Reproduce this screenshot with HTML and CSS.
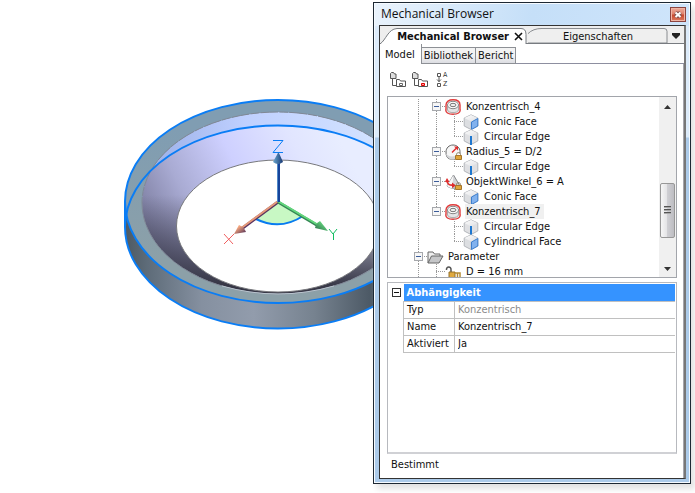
FILE: index.html
```html
<!DOCTYPE html>
<html lang="de">
<head>
<meta charset="utf-8">
<title>Mechanical Browser</title>
<link rel="stylesheet" href="styles.css">
</head>
<body>
<svg class="defs" aria-hidden="true">
  <defs>
    <linearGradient id="cubeTop" x1="0" y1="0" x2="1" y2="1"><stop offset="0" stop-color="#fdfdfd"/><stop offset="1" stop-color="#dfe0e3"/></linearGradient>
    <symbol id="face" viewBox="1 0 18 16">
      <path d="M9 .8 15.800 4v8L9 15.500 2.200 12V4z" fill="#dcdee1" stroke="#b4b7bc"/>
      <path d="M9 1 15.500 4 9 7.500 2.500 4z" fill="url(#cubeTop)"/>
      <path d="M9 7.500v8" stroke="#c4c7cb"/>
      <path d="M9.500 8 15.800 4.500V12l-6.300 3.500z" fill="#82b2ee" stroke="#3d7fce"/>
    </symbol>
    <symbol id="edge" viewBox="1 0 18 16">
      <path d="M9 .8 15.800 4v8L9 15.500 2.200 12V4z" fill="#dfe0e3" stroke="#b4b7bc"/>
      <path d="M9 1 15.500 4 9 7.500 2.500 4z" fill="url(#cubeTop)"/>
      <path d="M9 7v9" stroke="#1f78d0" stroke-width="2"/>
    </symbol>
    <symbol id="concentric" viewBox="1 0 18 16">
      <path d="M2 10V6C2 2.500 5 .8 9 .8S16 2.500 16 6v4c1 3.500-2.500 5.300-7 5.300S1 13.500 2 10z" fill="#ededed" stroke="#e13c3c" stroke-width="1.400"/>
      <path d="M3.500 6v5c1 3.500 10 3.500 11 0V6" fill="#e4e4e6" stroke="#aaa"/>
      <ellipse cx="9" cy="6" rx="5.500" ry="3.700" fill="#fff" stroke="#888"/>
      <ellipse cx="9" cy="6" rx="3" ry="1.700" fill="#eee" stroke="#777"/>
    </symbol>
    <symbol id="lock" viewBox="0 0 7 8">
      <path d="M1.500 4V2.500c0-2.500 4-2.500 4 0V4" fill="none" stroke="#8b8169"/>
      <path d="M.5 3.500h6v4h-6z" fill="#e0a63a" stroke="#a4752a"/>
    </symbol>
    <symbol id="radius" viewBox="1 0 18 16">
      <path d="M10 15H6C3 14.500 2 12 2 8s3-7 7-7 7 3 7 6.500v2" fill="#f6f6f6" stroke="#666"/>
      <path d="M2 9c0 3 1 5 4 6h5V12C7 13 3 12 2 9z" fill="#d4d5d7"/>
      <path d="M8 8.500 12.500 4" stroke="#df2c2c" stroke-width="1.500"/><path d="M10 2.500h4v4z" fill="#df2c2c"/>
      <use href="#lock" x="11" y="8" width="7" height="8"/>
    </symbol>
    <symbol id="angle" viewBox="1 0 18 16">
      <path d="M9.500 1 16 12c-3 3-9 3-13 0z" fill="#d2d3d6" stroke="#85878a"/>
      <path d="M9.500 1 3 12c2 1.500 3 2 5 2z" fill="#f7f7f7"/>
      <path d="M3 7c0 3 3 4.500 6 4" stroke="#df2c2c" stroke-width="1.600" fill="none"/><path d="M.8 8 3 4l2.500 4zM8 8.500l4 3-4 2.500z" fill="#df2c2c"/>
      <use href="#lock" x="11" y="8" width="7" height="8"/>
    </symbol>
    <symbol id="folder" viewBox="1 0 18 16">
      <path d="M2 14V3h5l1.500 2H14v3" fill="#eee" stroke="#666"/>
      <path d="M2 14 5.500 7H17l-4 7z" fill="#c5c6c8" stroke="#666"/>
    </symbol>
    <symbol id="param" viewBox="1 0 18 16">
      <path d="M2.500 6C2 2 7.500 2 7 6v2" fill="none" stroke="#555" stroke-width="1.500"/>
      <path d="M5 8h6v8H5z" fill="#dfa940" stroke="#94702a"/><path d="M11 9h5v7M13.500 9v7" fill="none" stroke="#b58a32" stroke-width="1.500"/>
    </symbol>
  </defs>
</svg>
<div class="workspace">
  <main class="viewport">
    <svg class="model" viewBox="0 0 373 493" preserveAspectRatio="xMinYMin slice" role="img" aria-label="3D-Modell">
      <defs>
        <linearGradient id="wall" gradientUnits="userSpaceOnUse" x1="125" y1="0" x2="431" y2="0">
          <stop offset="0" stop-color="#4d5962"/><stop offset=".07" stop-color="#5d6b78"/><stop offset=".25" stop-color="#8590a0"/><stop offset=".42" stop-color="#929cac"/><stop offset=".62" stop-color="#76828f"/><stop offset=".82" stop-color="#485561"/><stop offset="1" stop-color="#404c57"/>
        </linearGradient>
        <linearGradient id="rim" gradientUnits="userSpaceOnUse" x1="0" y1="130" x2="0" y2="260">
          <stop offset="0" stop-color="#809db2"/><stop offset="1" stop-color="#8ca0a8"/>
        </linearGradient>
        <linearGradient id="cone" gradientUnits="userSpaceOnUse" x1="142" y1="230" x2="335" y2="130">
          <stop offset="0" stop-color="#77789a"/><stop offset=".25" stop-color="#a9abd3"/><stop offset=".52" stop-color="#ced0ff"/><stop offset=".8" stop-color="#e1e5ff"/><stop offset="1" stop-color="#e8edff"/>
        </linearGradient>
        <linearGradient id="coneDark" gradientUnits="userSpaceOnUse" x1="0" y1="195" x2="0" y2="285">
          <stop offset="0" stop-color="#30303e" stop-opacity="0"/><stop offset="1" stop-color="#30303e" stop-opacity=".95"/>
        </linearGradient>
        <linearGradient id="band" gradientUnits="userSpaceOnUse" x1="160" y1="0" x2="373" y2="0">
          <stop offset="0" stop-color="#9fb3ea"/><stop offset=".4" stop-color="#bfd0ff"/><stop offset="1" stop-color="#d2e2ff"/>
        </linearGradient>
        <linearGradient id="zAxis" x1="0" x2="1"><stop offset="0" stop-color="#6aa7ce"/><stop offset="1" stop-color="#173773"/></linearGradient>
        <linearGradient id="xTip" x1="0" y1="0" x2="1" y2="1"><stop offset=".3" stop-color="#f4a57d"/><stop offset="1" stop-color="#412452"/></linearGradient>
        <linearGradient id="yTip" x1="1" y1="0" x2="0" y2="1"><stop offset=".3" stop-color="#62d17c"/><stop offset="1" stop-color="#286746"/></linearGradient>
        <clipPath id="inner"><ellipse cx="278" cy="203" rx="136" ry="91"/></clipPath>
      </defs>
      <path d="M125 201.500V227a153 101.500 0 0 0 306 0v-25.500z" fill="url(#wall)"/>
      <ellipse cx="278" cy="201.500" rx="153" ry="101.500" fill="url(#rim)"/>
      <g clip-path="url(#inner)">
        <ellipse cx="278" cy="203" rx="136" ry="91" fill="url(#band)"/>
        <ellipse cx="278" cy="227" rx="153" ry="101.500" fill="url(#cone)"/>
        <path d="M140 190h276v110H140z" fill="url(#coneDark)"/>
        <ellipse cx="278" cy="226" rx="101.500" ry="66" fill="#fff" stroke="#77787c"/>
      </g>
      <ellipse cx="278" cy="203" rx="136" ry="91" fill="none" stroke="#808896" stroke-dasharray="18 1 9 1"/>
      <path d="M222 286q56 16 112 0" fill="none" stroke="#b9c5ce"/>
      <path d="M125 202V227a153 101.500 0 0 0 306 0v-25" fill="none" stroke="#0a7df5" stroke-width="2"/>
      <path d="M125 227a153 101.500 0 0 1 306 0" fill="none" stroke="#0a7df5" stroke-width="2"/>
      <ellipse cx="278" cy="201.500" rx="153" ry="101.500" fill="none" stroke="#0a7df5" stroke-width="2"/>
      <path d="M278 202 303 217q-23 14-47 2z" fill="#c8f8c4"/>
      <path d="M256 219q24 12 47-3" fill="none" stroke="#087bf0" stroke-width="2"/>
      <path d="M278 202 240 230" stroke="#583260" stroke-width="3"/><path d="M277.500 201.500 240 229" stroke="#e5997a" stroke-width="2"/>
      <path d="M278 202 320 227" stroke="#348655" stroke-width="3"/><path d="M278.500 201.500 320 226" stroke="#62d77c" stroke-width="2"/>
      <path d="M234 234 239 225q5 2 7 7z" fill="url(#xTip)"/>
      <path d="M328 231 320 221q-4 2-5 7z" fill="url(#yTip)"/>
      <path d="M278.500 162v40" stroke="#17439a" stroke-width="3"/><path d="M277.500 162v40" stroke="#4f88c8"/>
      <path d="M278.500 152 273 162q5 4 10 0z" fill="url(#zAxis)"/>
      <path d="M273 140.500h10l-10 12h10" fill="none" stroke="#0a7df5"/>
      <path d="M224 234l9 10M234 234l-10 10" fill="none" stroke="#f06060"/>
      <path d="M329 229l4 5 4-5M333.500 234v6" fill="none" stroke="#10bd60"/>
    </svg>
  </main>

  <aside class="palette">
    <header class="titlebar">
      <h1>Mechanical Browser</h1>
      <button class="close" aria-label="Schließen"><svg viewBox="0 0 14 13"><path d="M4.500 4.500 9.500 9M9.500 4.500 4.500 9" stroke="#80504e" stroke-width="4"/><path d="M4.500 4.500 9.500 9M9.500 4.500 4.500 9" stroke="#fff" stroke-width="2"/></svg></button>
    </header>
    <div class="frame">
      <nav class="doc-tabs">
        <button class="doc-tab active">
          <svg class="shape" viewBox="0 0 148 16" preserveAspectRatio="none"><path d="M0 16C6 12 8 1 17 .5H141q5 0 5 6V16" fill="#fff" stroke="#777b80"/></svg>
          <span>Mechanical Browser</span>
          <svg class="x" viewBox="0 0 9 9"><path d="M1 1l7 7M8 1 1 8" stroke="#111" stroke-width="1.600"/></svg>
        </button>
        <button class="doc-tab">
          <svg class="shape" viewBox="0 0 140 16" preserveAspectRatio="none"><path d="M0 6Q5 .5 14 .5H136q3 0 3 3V16H0" fill="#efefef" stroke="#85888c"/></svg>
          <span>Eigenschaften</span>
        </button>
        <button class="menu" aria-label="Registerliste"><svg viewBox="0 0 8 6"><path d="M0 0h8v2L4 6 0 2z" fill="#222"/></svg></button>
      </nav>
      <nav class="page-tabs">
        <button class="page-tab active">Model</button>
        <button class="page-tab">Bibliothek</button>
        <button class="page-tab">Bericht</button>
      </nav>
      <section class="page">
        <div class="toolbar">
          <button aria-label="Alle erweitern"><svg viewBox="0 0 16 16"><path d="M.5 6.500v-5l1-1h2l1 1.500h1.500v4.500z" fill="#ddd" stroke="#555"/><path d="M2.500 7v6.500H6M6.500 14.500v-7h3l1 1.500h5v5.500z" fill="#fff" stroke="#555"/><path d="M9.500 11.500h3v2h-3z" fill="#fff" stroke="#666"/></svg></button>
          <button aria-label="Alle reduzieren"><svg viewBox="0 0 16 16"><path d="M.5 6.500v-5l1-1h2l1 1.500h1.500v4.500z" fill="#ddd" stroke="#555"/><path d="M2.500 7v6.500H6M6.500 14.500v-7h3l1 1.500h5v5.500z" fill="#fff" stroke="#555"/><path d="M9.500 11.500h3v2h-3z" fill="#f99" stroke="#e00000"/></svg></button>
          <button class="sort" aria-label="Sortieren"><svg viewBox="0 0 6 16"><path d="M1.500 1.500h3v3h-3zM1.500 11.500h3v3h-3zM3 5v5M1 7.500l2 2 2-2" fill="none" stroke="#555"/></svg><span>A<br>Z</span></button>
        </div>
        <div class="tree-box">
          <ul class="tree">
            <li><i class="v"></i><i class="t"><b></b></i><svg><use href="#concentric"/></svg><span>Konzentrisch_4</span></li>
            <li><i class="v"></i><i class="v"></i><i class="t"></i><svg><use href="#face"/></svg><span>Conic Face</span></li>
            <li><i class="v"></i><i class="v"></i><i class="l"></i><svg><use href="#edge"/></svg><span>Circular Edge</span></li>
            <li><i class="v"></i><i class="t"><b></b></i><svg><use href="#radius"/></svg><span>Radius_5 = D/2</span></li>
            <li><i class="v"></i><i class="v"></i><i class="l"></i><svg><use href="#edge"/></svg><span>Circular Edge</span></li>
            <li><i class="v"></i><i class="t"><b></b></i><svg><use href="#angle"/></svg><span>ObjektWinkel_6 = A</span></li>
            <li><i class="v"></i><i class="v"></i><i class="l"></i><svg><use href="#face"/></svg><span>Conic Face</span></li>
            <li><i class="v"></i><i class="l"><b></b></i><svg><use href="#concentric"/></svg><span class="selected">Konzentrisch_7</span></li>
            <li><i class="v"></i><i></i><i class="t"></i><svg><use href="#edge"/></svg><span>Circular Edge</span></li>
            <li><i class="v"></i><i></i><i class="l"></i><svg><use href="#face"/></svg><span>Cylindrical Face</span></li>
            <li><i class="t"><b></b></i><svg><use href="#folder"/></svg><span>Parameter</span></li>
            <li><i class="v"></i><i class="t"></i><svg><use href="#param"/></svg><span>D = 16 mm</span></li>
          </ul>
          <div class="scrollbar">
            <svg class="arrow" viewBox="0 0 7 4"><path d="M0 4 3.500 0 7 4z" fill="#333"/></svg>
            <div class="thumb"><svg viewBox="0 0 7 9"><path d="M0 .5h7M0 3.500h7M0 6.500h7" stroke="#555"/><path d="M0 1.500h7M0 4.500h7M0 7.500h7" stroke="#aaa"/></svg></div>
            <svg class="arrow" viewBox="0 0 7 4"><path d="M0 0 3.500 4 7 0z" fill="#333"/></svg>
          </div>
        </div>
        <div class="props">
          <button class="fold" aria-label="Abhängigkeit reduzieren"></button>
          <table>
            <thead><tr><th colspan="2">Abhängigkeit</th></tr></thead>
            <tbody>
              <tr><th>Typ</th><td class="muted">Konzentrisch</td></tr>
              <tr><th><label for="name">Name</label></th><td><input id="name" value="Konzentrisch_7"></td></tr>
              <tr><th><label for="active">Aktiviert</label></th><td><select id="active"><option>Ja</option><option>Nein</option></select></td></tr>
            </tbody>
          </table>
        </div>
        <footer class="status">Bestimmt</footer>
      </section>
    </div>
  </aside>
</div>
</body>
</html>
```

FILE: styles.css
```css
* { box-sizing: border-box; }
body {
  margin: 0;
  background: #fff;
  color: #111;
  font: 11px/15px "DejaVu Sans Condensed", "DejaVu Sans", sans-serif;
}
button, input, select { font: inherit; color: inherit; padding: 0; margin: 0; border: 0; background: none; }
svg { display: block; fill: none; }
.defs { width: 0; height: 0; position: absolute; }
.workspace { display: flex; height: 100vh; overflow: hidden; }
.viewport { flex: 1; min-width: 0; overflow: hidden; }
.model { width: 100%; height: 100%; }

/* floating palette */
.palette {
  flex: 0 0 318px;
  display: flex;
  flex-direction: column;
  margin: 2px 4px 9px 0;
  padding: 0 4px 4px;
  border: 1px solid #1d2833;
  background: linear-gradient(100deg, #eaf3fc, #c5dff8 50%, #cfe5fb) top / 100% 23px no-repeat,
    linear-gradient(#dcebfa 0 134px, #accbea 135px);
  box-shadow: inset 0 0 0 1px #f5faff, 4px 5px 6px #e2e2e2;
}
.titlebar { display: flex; justify-content: space-between; align-items: center; flex: none; height: 22px; padding-left: 3px; }
.titlebar h1 { margin: 0; font: 12px/22px "Open Sans", "Noto Sans", sans-serif; }
.close {
  width: 16px;
  height: 15px;
  margin-top: 1px;
  border: 1px solid #8c4541;
  background: linear-gradient(#edaa9b, #df8069 48%, #c9472c 52%, #dc7c60);
  box-shadow: inset 0 0 0 1px #f0b5a5;
}
.frame {
  flex: 1;
  min-height: 0;
  display: flex;
  flex-direction: column;
  margin: 0 0 0 1px;
  border: 1px solid #333;
  border-right: 2px solid #777;
  background: #fff;
}

/* document tabs */
.doc-tabs { display: flex; align-items: flex-end; flex: none; height: 18px; background: #eee; border-bottom: 1px solid #777b80; }
.doc-tab { position: relative; display: flex; flex: 1; align-items: center; justify-content: center; height: 16px; margin-bottom: -1px; }
.doc-tab.active { flex: 0 0 148px; justify-content: flex-end; gap: 5px; padding-right: 5px; font-weight: bold; z-index: 1; }
.doc-tab .shape { position: absolute; inset: 0; width: 100%; height: 100%; }
.doc-tab:not(.active) .shape { height: 15px; }
.doc-tab span, .doc-tab .x { position: relative; }
.doc-tab .x { width: 9px; height: 9px; }
.menu { width: 16px; height: 15px; display: flex; align-items: center; justify-content: center; }
.menu svg { width: 8px; height: 6px; }

/* page tabs */
.page-tabs {
  display: flex;
  align-items: flex-end;
  flex: none;
  height: 20px;
  background: linear-gradient(#8d8fa0, #8d8fa0) 42px 100% / 100% 1px no-repeat;
}
.page-tab {
  height: 17px;
  padding: 0 2px;
  border: 1px solid #8d9095;
  border-left-width: 0;
  background: linear-gradient(#f3f3f3 50%, #dcdde2);
}
.page-tab.active { height: 20px; padding: 0 6px 0 5px; border-width: 0 1px 0 0; background: #fff; }
.page {
  flex: 1;
  min-height: 0;
  display: flex;
  flex-direction: column;
  padding: 0 6px 0 7px;
  border-right: 1px solid #a5a5ac;
}
.toolbar { display: flex; align-items: center; gap: 6px; flex: none; height: 32px; padding-left: 3px; }
.toolbar svg { width: 16px; height: 16px; }
.toolbar .sort { display: flex; align-items: center; margin-left: 2px; }
.toolbar .sort svg { width: 6px; }
.sort span { font-size: 7px; line-height: 9px; margin-left: 1px; color: #333; }

/* tree */
.tree-box { display: flex; flex: 0 1 182px; border: 1px solid #a2a5ab; overflow: hidden; }
.tree { flex: 1; min-width: 0; margin: 0; padding: 2px 0 0 21px; list-style: none; overflow: hidden; }
.tree li { display: flex; align-items: center; height: 15px; }
.tree li > svg { flex: none; width: 18px; height: 16px; margin-right: 2px; }
.tree span { padding: 0 1px; white-space: nowrap; }
.tree .selected { background: #f0f0f0; padding-right: 3px; }
.tree i {
  flex: none;
  display: grid;
  place-items: center;
  width: 18px;
  height: 15px;
  --v: repeating-linear-gradient(#999 0 1px, transparent 1px 2px);
  --h: repeating-linear-gradient(90deg, #999 0 1px, transparent 1px 2px);
}
.tree .v { background: var(--v) 9px 0 / 1px 100% no-repeat; }
.tree .t { background: var(--v) 9px 0 / 1px 100% no-repeat, var(--h) 9px 7px / 9px 1px no-repeat; }
.tree .l { background: var(--v) 9px 0 / 1px 8px no-repeat, var(--h) 9px 7px / 9px 1px no-repeat; }
.tree b, .fold {
  width: 9px;
  height: 9px;
  border: 1px solid #a6a8ac;
  background: linear-gradient(#3b5c9a, #3b5c9a) center / 5px 1px no-repeat, #f6f6f6;
}
.scrollbar { display: flex; flex-direction: column; align-items: center; width: 17px; padding: 8px 1px 6px 0; background: #f0f0f0; }
.scrollbar .arrow { width: 7px; height: 4px; }
.thumb {
  display: grid;
  place-items: center;
  width: 15px;
  height: 55px;
  margin: 74px 0 auto;
  border: 1px solid #979797;
  border-radius: 2px;
  background: linear-gradient(90deg, #f6f6f6, #e4e4e6 45%, #cfcfd3 50%, #bdbdc2);
}
.thumb svg { width: 7px; height: 9px; }

/* property grid */
.props { display: flex; align-items: flex-start; flex: 1; min-height: 0; margin-top: 4px; border: 1px solid #b7b9be; padding: 1px 1px 0 0; border-bottom: 2px solid #d0d1d5; }
.fold { flex: none; margin: 4px 2px 0 4px; border-color: #333; background: linear-gradient(#111, #111) center / 5px 1px no-repeat; }
.props table { flex: 1; border-collapse: collapse; width: 100%; }
.props th, .props td { height: 17px; padding: 0 3px; border: 1px solid #c0c0c0; text-align: left; font-weight: normal; line-height: 15px; }
.props td { border-right: 0; }
.props thead th { border: 0; background: #3593ff; color: #fff; font-weight: bold; }
.props tbody th { width: 51px; }
.props .muted { color: #8b8b8b; }
.props input, .props select { display: block; width: 100%; height: 15px; outline: 0; appearance: none; }
.status { flex: none; height: 24px; padding-left: 4px; line-height: 22px; }
```
